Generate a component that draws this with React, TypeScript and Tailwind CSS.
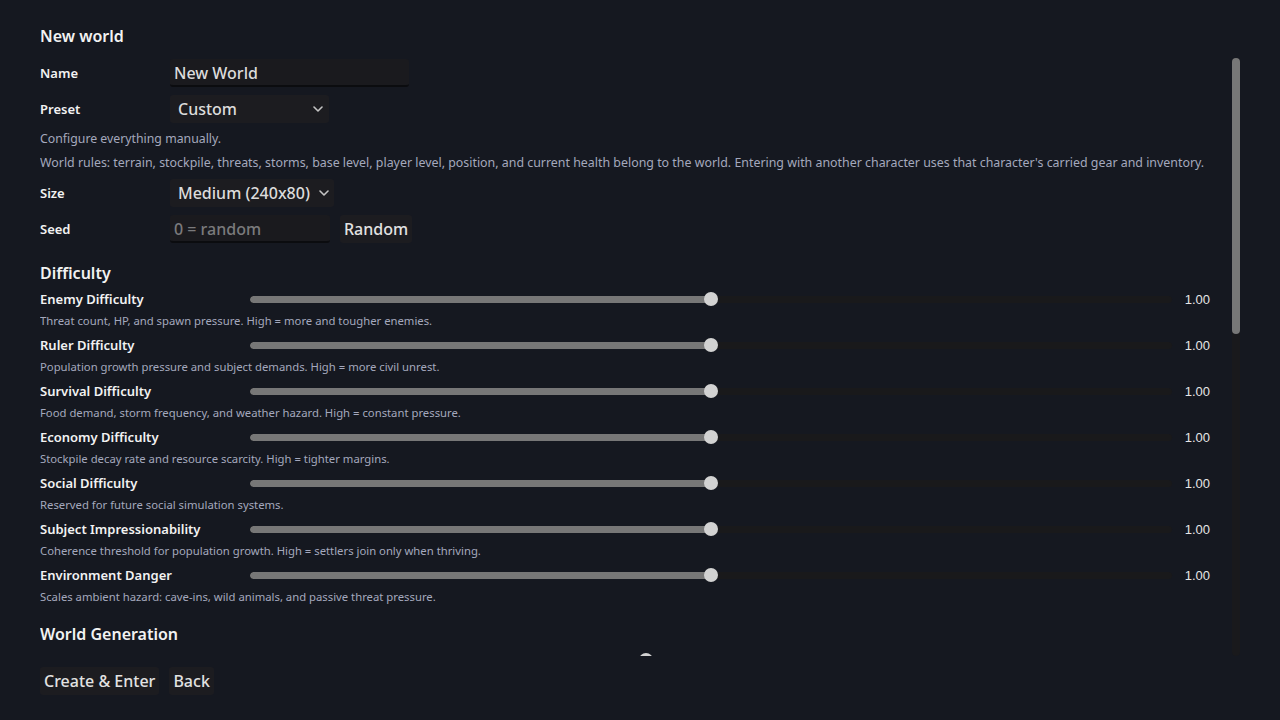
import { FC, ReactNode } from 'react'

type Setting = {
  label: string
  hint?: string
  value: number
  hideValue?: boolean
}

const difficulty: Setting[] = [
  { label: 'Enemy Difficulty', hint: 'Threat count, HP, and spawn pressure. High = more and tougher enemies.', value: 1 },
  { label: 'Ruler Difficulty', hint: 'Population growth pressure and subject demands. High = more civil unrest.', value: 1 },
  { label: 'Survival Difficulty', hint: 'Food demand, storm frequency, and weather hazard. High = constant pressure.', value: 1 },
  { label: 'Economy Difficulty', hint: 'Stockpile decay rate and resource scarcity. High = tighter margins.', value: 1 },
  { label: 'Social Difficulty', hint: 'Reserved for future social simulation systems.', value: 1 },
  { label: 'Subject Impressionability', hint: 'Coherence threshold for population growth. High = settlers join only when thriving.', value: 1 },
  { label: 'Environment Danger', hint: 'Scales ambient hazard: cave-ins, wild animals, and passive threat pressure.', value: 1 },
]

const Chevron = () => (
  <svg width="10" height="6" viewBox="0 0 10 6" className="shrink-0">
    <path d="M1 1l4 4 4-4" fill="none" stroke="#c4c4c4" strokeWidth="1.6" strokeLinecap="round" strokeLinejoin="round" />
  </svg>
)

const Row: FC<{ label: string; children: ReactNode }> = ({ label, children }) => (
  <div className="flex h-7 items-center">
    <div className="w-[130px] shrink-0 pt-[1px] text-[13px] font-semibold text-[#f2f2f2]">{label}</div>
    {children}
  </div>
)

const Slider: FC<{ value: number; max?: number }> = ({ value, max = 2 }) => {
  const pct = (value / max) * 100
  return (
    <div className="relative flex h-[14px] flex-1 items-center">
      <div className="h-[7px] w-full overflow-hidden rounded-full bg-[#19191b]">
        <div className="h-full rounded-full bg-[#777777]" style={{ width: `${pct}%` }} />
      </div>
      <div
        className="absolute top-0 size-[14px] -translate-x-1/2 rounded-full bg-[#d2d2d2]"
        style={{ left: `${pct}%` }}
      />
    </div>
  )
}

const SliderRow: FC<Setting> = ({ label, hint, value, hideValue }) => (
  <div className="flex flex-col gap-1">
    <div className="flex h-5 items-center">
      <div className="w-[210px] shrink-0 pt-[1px] text-[13px] font-semibold text-[#f2f2f2]">{label}</div>
      <Slider value={value} />
      <div className="ml-2 w-[30px] pt-[1px] text-right font-['Liberation_Sans',sans-serif] text-[13px] text-[#e6e6e6]">
        {hideValue ? '' : value.toFixed(2)}
      </div>
    </div>
    {hint && <div className="h-4 text-[11.3px] leading-4 text-[#a4a8bd]">{hint}</div>}
  </div>
)

export default function App() {
  return (
    <div className="flex h-[720px] w-[1280px] flex-col bg-[#151820] px-10 font-['Noto_Sans','Open_Sans',sans-serif]">
      <div className="mt-[26px] h-5 text-[16px] font-semibold leading-5 text-[#f2f2f2]">New world</div>

      <div className="mt-[11px] flex h-[599px] overflow-hidden">
        <div className="flex flex-1 flex-col gap-2 pr-[22px] pt-[2px]">
          <Row label="Name">
            <div className="flex h-7 w-[239px] items-center rounded-[3px] border-b-2 border-[#0b0c0f] bg-[#1a1a1e] px-1 pt-[2px] text-[16px] font-medium text-[#dcdcdc]">
              New World
            </div>
          </Row>
          <Row label="Preset">
            <div className="flex h-7 w-[159px] items-center justify-between rounded-[3px] bg-[#1c1c20] pl-2 pr-[6px] text-[16px] font-medium text-[#dcdcdc]">
              <span>Custom</span>
              <Chevron />
            </div>
          </Row>
          <div className="h-4 text-[12.3px] leading-4 text-[#a4a8bd]">Configure everything manually.</div>
          <div className="h-4 whitespace-nowrap text-[12.4px] leading-4 text-[#a4a8bd]">
            World rules: terrain, stockpile, threats, storms, base level, player level, position, and current health belong to the world. Entering with another character uses that character's carried gear and inventory.
          </div>
          <Row label="Size">
            <div className="flex h-7 items-center gap-[9px] rounded-[3px] bg-[#1c1c20] pl-2 pr-[5px] text-[16px] font-medium text-[#dcdcdc]">
              <span>Medium (240x80)</span>
              <Chevron />
            </div>
          </Row>
          <Row label="Seed">
            <div className="flex h-7 w-40 items-center rounded-[3px] border-b-2 border-[#0b0c0f] bg-[#1a1a1e] px-1 pt-[2px] text-[16px] font-medium text-[#7a7a7c]">
              0 = random
            </div>
            <div className="ml-[10px] flex h-7 items-center rounded-[3px] bg-[#1c1c20] px-1 text-[16px] font-medium text-[#e2e2e2]">
              Random
            </div>
          </Row>

          <div className="mt-3 flex flex-col gap-1.5">
            <div className="h-5 text-[16px] font-semibold leading-5 text-[#f2f2f2]">Difficulty</div>
            {difficulty.map((s) => (
              <SliderRow key={s.label} {...s} />
            ))}
          </div>

          <div className="mt-[11px] flex flex-col gap-[6px]">
            <div className="h-5 text-[16px] font-semibold leading-5 text-[#f2f2f2]">World Generation</div>
            <SliderRow label="" value={0.86} hideValue />
          </div>
        </div>

        <div className="mt-[1px] flex w-2 flex-col rounded-full bg-[#19191c]">
          <div className="h-[276px] rounded-full bg-[#777777]" />
        </div>
      </div>

      <div className="mt-[11px] flex gap-[10px]">
        <div className="flex h-7 items-center rounded-[3px] bg-[#1c1c20] px-1 text-[16px] font-medium text-[#e2e2e2]">Create &amp; Enter</div>
        <div className="flex h-7 items-center rounded-[3px] bg-[#1c1c20] px-1 text-[16px] font-medium text-[#e2e2e2]">Back</div>
      </div>
    </div>
  )
}
